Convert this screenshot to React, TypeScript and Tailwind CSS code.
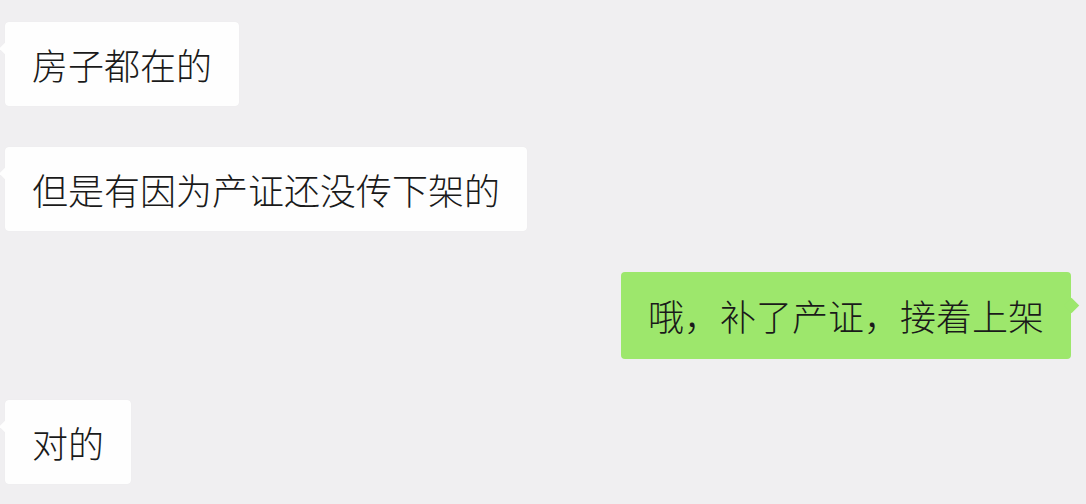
import React from "react";

type Msg = { text: string; mine?: boolean };

const messages: Msg[] = [
  { text: "房子都在的" },
  { text: "但是有因为产证还没传下架的" },
  { text: "哦，补了产证，接着上架", mine: true },
  { text: "对的" },
];

function Bubble({ text, mine }: Msg) {
  return (
    <div className={mine ? "flex justify-end pr-[15px]" : "flex justify-start pl-[5px]"}>
      <div
        className={
          "relative rounded-[4px] px-[27px] py-[15px] text-[36px] leading-[54px] font-light text-[#1a1a1a] " +
          (mine ? "bg-[#9de76c] h-[87px] py-[16px]" : "bg-[#fefefe] shadow-[0_0_1px_rgba(0,0,0,0.06)]")
        }
      >
        {mine ? (
          <span className="absolute right-[-6px] top-[28px] w-[11px] h-[11px] rotate-45 bg-[#9de76c]" />
        ) : (
          <span className="absolute left-[-4px] top-[22px] w-[9px] h-[9px] rotate-45 bg-[#fefefe]" />
        )}
        <span className="relative">{text}</span>
      </div>
    </div>
  );
}

export default function App() {
  return (
    <div
      className="w-[1086px] h-[504px] overflow-hidden bg-[#f0eff1] pt-[22px] flex flex-col gap-[41px]"
      style={{ fontFamily: '"Noto Sans CJK SC", "Noto Sans", sans-serif' }}
    >
      {messages.map((m, i) => (
        <Bubble key={i} {...m} />
      ))}
    </div>
  );
}
